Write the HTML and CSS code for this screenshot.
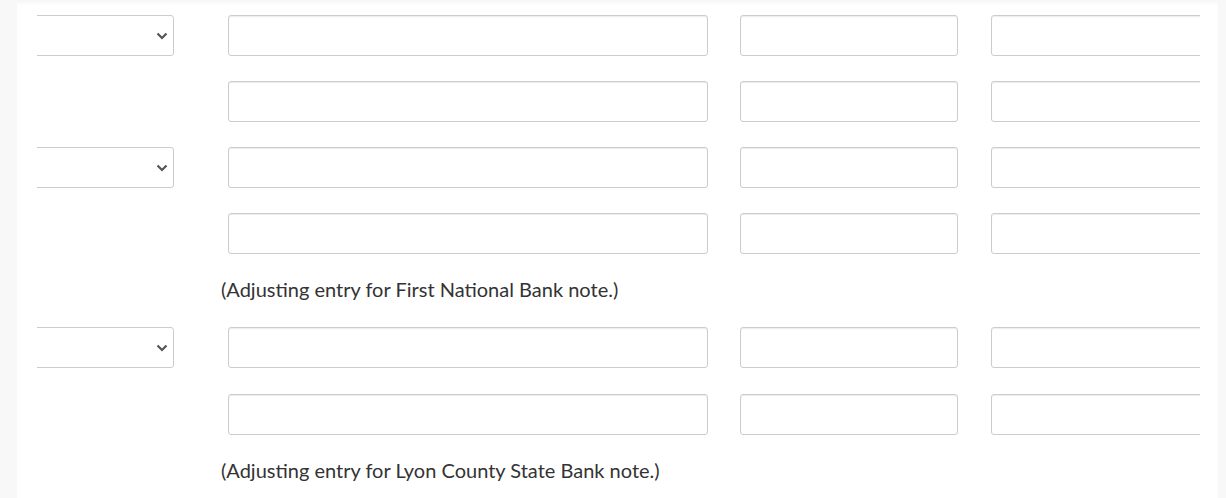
FILE: index.html
```html
<!DOCTYPE html>
<html>
<head>
<meta charset="utf-8">
<link rel="stylesheet" href="styles.css">
</head>
<body>
<div class="panel">
  <div class="clip">
    <div class="rows">
      <div class="row">
        <div class="select"><svg width="12" height="8" viewBox="0 0 12 8"><path d="M1.5 1.5 L6 6 L10.5 1.5" fill="none" stroke="#555" stroke-width="2.2"/></svg></div>
        <div class="field f1"></div><div class="field f2"></div><div class="field f3"></div>
      </div>
      <div class="row">
        <div class="empty"></div>
        <div class="field f1"></div><div class="field f2"></div><div class="field f3"></div>
      </div>
      <div class="row">
        <div class="select"><svg width="12" height="8" viewBox="0 0 12 8"><path d="M1.5 1.5 L6 6 L10.5 1.5" fill="none" stroke="#555" stroke-width="2.2"/></svg></div>
        <div class="field f1"></div><div class="field f2"></div><div class="field f3"></div>
      </div>
      <div class="row">
        <div class="empty"></div>
        <div class="field f1"></div><div class="field f2"></div><div class="field f3"></div>
      </div>
      <p class="note n1">(Adjusting entry for First National Bank note.)</p>
      <div class="row r5">
        <div class="select"><svg width="12" height="8" viewBox="0 0 12 8"><path d="M1.5 1.5 L6 6 L10.5 1.5" fill="none" stroke="#555" stroke-width="2.2"/></svg></div>
        <div class="field f1"></div><div class="field f2"></div><div class="field f3"></div>
      </div>
      <div class="row r6">
        <div class="empty"></div>
        <div class="field f1"></div><div class="field f2"></div><div class="field f3"></div>
      </div>
      <p class="note n2">(Adjusting entry for Lyon County State Bank note.)</p>
    </div>
  </div>
</div>
</body>
</html>
```
FILE: styles.css
```css
html, body {
  margin: 0;
  padding: 0;
  background: #f8f8f8;
  font-family: Lato, "Open Sans", sans-serif;
  height: 498px;
  overflow: hidden;
}
.panel {
  margin-left: 17px;
  width: 1201px;
  height: 498px;
  background: #fff;
  box-shadow: inset 0 5px 5px -3px rgba(0, 0, 0, 0.05);
}
.clip {
  margin-left: 20px;
  width: 1163px;
  overflow: hidden;
  padding-top: 15px;
}
.rows {
  margin-left: -23px;
}
.row {
  display: flex;
  height: 41px;
  margin-bottom: 25px;
}
.select, .empty {
  width: 160px;
  flex: none;
  box-sizing: border-box;
}
.select {
  border: 1px solid #ccc;
  border-radius: 3px;
  display: flex;
  align-items: center;
  justify-content: flex-end;
  padding-right: 5px;
}
.select svg {
  margin-top: 1px;
}
.field {
  flex: none;
  box-sizing: border-box;
  height: 41px;
  border: 1px solid #ccc;
  border-radius: 3px;
  box-shadow: inset 0 1px 1px rgba(0, 0, 0, 0.075);
  background: #fff;
}
.f1 { width: 480px; margin-left: 54px; }
.f2 { width: 218px; margin-left: 32px; }
.f3 { width: 250px; margin-left: 33px; }
.note {
  margin: 0;
  margin-left: 207px;
  font-size: 20px;
  line-height: 24px;
  color: #333;
  white-space: nowrap;
}
.n1 { margin-top: -2px; margin-bottom: 26px; }
.r5 { margin-bottom: 26px; }
.r6 { margin-bottom: 23px; }
.n2 { margin-top: 0; }
```
